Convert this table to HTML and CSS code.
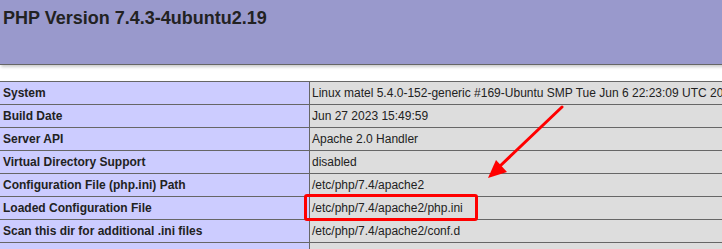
FILE: index.html
```html
<!DOCTYPE html>
<html>
<head>
<meta charset="utf-8">
<title>phpinfo()</title>
<link rel="stylesheet" href="styles.css">
</head>
<body>
<div class="page">
  <div class="header">
    <h1 class="title">PHP Version 7.4.3-4ubuntu2.19</h1>
  </div>
  <div class="info">
    <div class="row"><div class="e">System</div><div class="v">Linux matel 5.4.0-152-generic #169-Ubuntu SMP Tue Jun 6 22:23:09 UTC 2023 x86_64</div></div>
    <div class="row"><div class="e">Build Date</div><div class="v">Jun 27 2023 15:49:59</div></div>
    <div class="row"><div class="e">Server API</div><div class="v">Apache 2.0 Handler</div></div>
    <div class="row"><div class="e">Virtual Directory Support</div><div class="v">disabled</div></div>
    <div class="row"><div class="e">Configuration File (php.ini) Path</div><div class="v">/etc/php/7.4/apache2</div></div>
    <div class="row"><div class="e">Loaded Configuration File</div><div class="v">/etc/php/7.4/apache2/php.ini</div></div>
    <div class="row"><div class="e">Scan this dir for additional .ini files</div><div class="v">/etc/php/7.4/apache2/conf.d</div></div>
    <div class="row"><div class="e">Additional .ini files parsed</div><div class="v">/etc/php/7.4/apache2/conf.d/10-mysqlnd.ini, /etc/php/7.4/apache2/conf.d/10-opcache.ini</div></div>
  </div>
  <svg class="marks" width="722" height="249" viewBox="0 0 722 249" xmlns="http://www.w3.org/2000/svg">
    <rect x="305.5" y="195.5" width="171" height="24" rx="1.5" fill="none" stroke="#ff0000" stroke-width="3"/>
    <line x1="562" y1="107" x2="499" y2="167" stroke="#ff0000" stroke-width="3" stroke-linecap="round"/>
    <polygon points="488,178 496,160 507,172" fill="#ff0000"/>
  </svg>
</div>
</body>
</html>
```

FILE: styles.css
```css
html, body {
  margin: 0;
  padding: 0;
  background: #fff;
}

body {
  width: 722px;
  height: 249px;
  overflow: hidden;
  color: #222;
  font-family: "Liberation Sans", Arial, sans-serif;
}

.page {
  position: relative;
  width: 722px;
  height: 249px;
  overflow: hidden;
}

.header {
  box-sizing: border-box;
  width: 934px;
  height: 65px;
  padding: 8px 0 0 3px;
  background: #9999cc;
  border-bottom: 1px solid #666;
  box-shadow: 1px 2px 3px #ccc;
  margin-bottom: 16px;
}

.title {
  margin: 0;
  font-size: 18px;
  line-height: 20px;
  font-weight: bold;
  color: #222;
}

.info {
  width: 934px;
  border-top: 1px solid #666;
  box-shadow: 1px 2px 3px #ccc;
}

.row {
  display: grid;
  grid-template-columns: 310px 1fr;
  border-bottom: 1px solid #666;
  font-size: 12px;
  line-height: 14px;
}

.e {
  background: #ccccff;
  font-weight: bold;
  padding: 4px 0 4px 3px;
  border-right: 1px solid #666;
  white-space: nowrap;
  overflow: hidden;
}

.v {
  background: #dddddd;
  padding: 4px 0 4px 2px;
  white-space: nowrap;
  overflow: hidden;
}

.marks {
  position: absolute;
  top: 0;
  left: 0;
  pointer-events: none;
}
```
